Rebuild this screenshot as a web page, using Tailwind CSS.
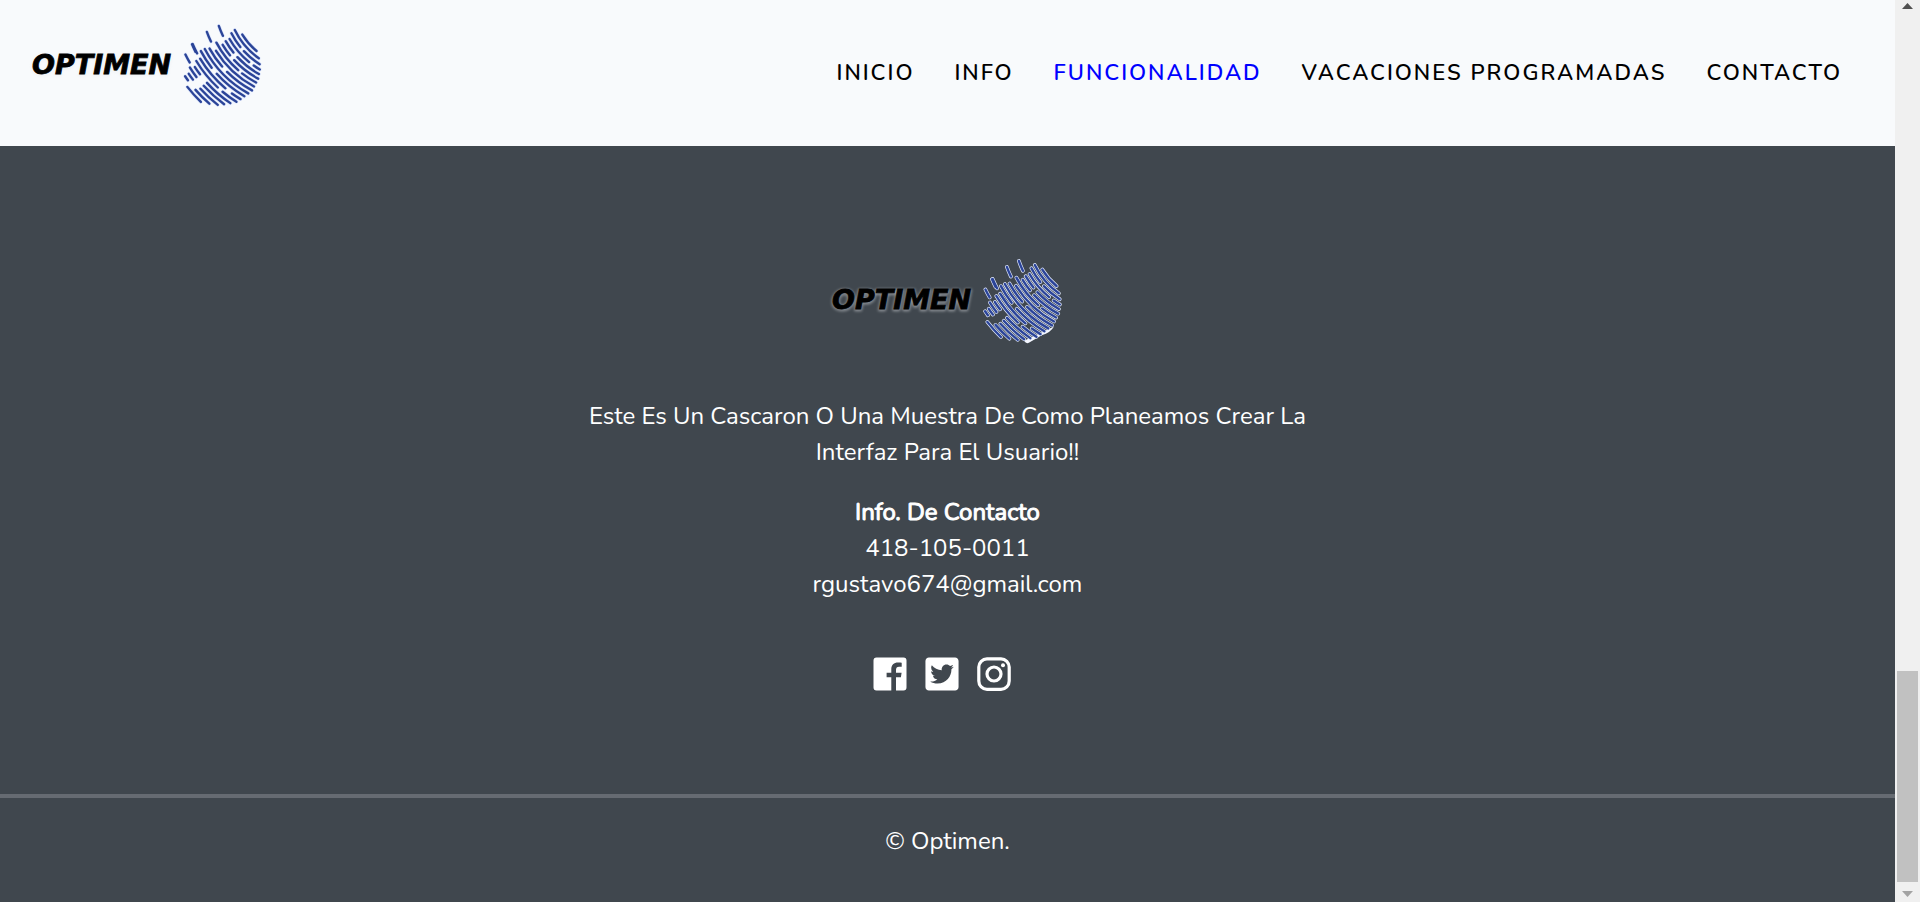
<!DOCTYPE html>
<html lang="es">
<head>
<meta charset="utf-8">
<meta name="viewport" content="width=device-width, initial-scale=1">
<title>Optimen</title>
<script src="https://cdn.jsdelivr.net/npm/@tailwindcss/browser@4"></script>
</head>
<body class="flex h-screen overflow-hidden bg-[#40474e] font-['Nunito','Lato',sans-serif]">
<!-- Shared logo artwork -->
<svg class="hidden" aria-hidden="true">
  <defs>
    <filter id="soft" x="-10%" y="-10%" width="120%" height="120%"><feGaussianBlur stdDeviation="1.5"/></filter>
    <g id="rings" fill="none" stroke-linecap="round">
      <circle pathLength="360" cx="389" cy="-53" r="204" stroke-dasharray="0 130 18 360"/>
      <circle pathLength="360" cx="389" cy="-53" r="217" stroke-dasharray="0 125 29 360"/>
      <circle pathLength="360" cx="389" cy="-53" r="230" stroke-dasharray="0 122 15 4 12 360"/>
      <circle pathLength="360" cx="389" cy="-53" r="243" stroke-dasharray="0 120 5 4 21 360"/>
      <circle pathLength="360" cx="389" cy="-53" r="256" stroke-dasharray="0 119 18 4 9 4 7 360"/>
      <circle pathLength="360" cx="389" cy="-53" r="269" stroke-dasharray="0 118 19 4 8 360"/>
      <circle pathLength="360" cx="389" cy="-53" r="282" stroke-dasharray="0 118 10 3 21 360"/>
      <circle pathLength="360" cx="389" cy="-53" r="295" stroke-dasharray="0 118 30 6 6 360"/>
      <circle pathLength="360" cx="389" cy="-53" r="308" stroke-dasharray="0 118 17 4 12 360"/>
      <circle pathLength="360" cx="389" cy="-53" r="321" stroke-dasharray="0 119 33 360"/>
      <circle pathLength="360" cx="389" cy="-53" r="334" stroke-dasharray="0 120 18 4 10 360"/>
      <circle pathLength="360" cx="389" cy="-53" r="347" stroke-dasharray="0 121 5 4 19 3 5 360"/>
      <circle pathLength="360" cx="389" cy="-53" r="360" stroke-dasharray="0 122 8 3 16 360"/>
      <circle pathLength="360" cx="389" cy="-53" r="373" stroke-dasharray="0 124 14 5 4 360"/>
      <circle pathLength="360" cx="389" cy="-53" r="379" stroke-dasharray="0 150 4 360"/>
      <circle pathLength="360" cx="389" cy="-53" r="386" stroke-dasharray="0 126 12 5 5 360"/>
      <circle pathLength="360" cx="389" cy="-53" r="399" stroke-dasharray="0 128 10 5 3 360"/>
      <circle pathLength="360" cx="389" cy="-53" r="412" stroke-dasharray="0 131 8 5 2 360"/>
      <circle pathLength="360" cx="389" cy="-53" r="425" stroke-dasharray="0 134 8 360"/>
      <circle pathLength="360" cx="389" cy="-53" r="349" stroke-dasharray="0 153 4 360"/>
    </g>
    <symbol id="logo" viewBox="0 0 255 100">
      <g font-family="DejaVu Sans, sans-serif" font-size="27" font-weight="700" font-style="italic">
        <text x="12" y="60" fill="none" stroke="#e8eaee" stroke-width="2" opacity=".6" filter="url(#soft)" aria-hidden="true">OPTIMEN</text>
        <text x="12" y="59" fill="#000" stroke="#000" stroke-width=".8">OPTIMEN</text>
      </g>
      <g transform="translate(149 1) scale(.34)">
        <path d="M250 222Q240 240 214 248L176 270Q168 274 162 264Z" fill="#f4f7ff" filter="url(#soft)"/>
        <use href="#rings" stroke="#dfe7fb" stroke-width="11" filter="url(#soft)"/>
        <use href="#rings" stroke="#2b4498" stroke-width="7"/>
      </g>
    </symbol>
  </defs>
</svg>

<div class="flex min-w-0 flex-1 flex-col">
  <header class="flex items-start justify-between bg-[#f8fafc] py-[15px] pl-5 pr-[53px]">
    <a href="#inicio" aria-label="Optimen"><svg class="h-[100px] w-[255px]"><use href="#logo"/></svg></a>
    <nav class="flex h-[116px] items-center gap-10 text-[22px] font-semibold tracking-[2px] text-black">
      <a href="#inicio">INICIO</a>
      <a href="#info">INFO</a>
      <a href="#funcionalidad" class="text-[#0000ff]">FUNCIONALIDAD</a>
      <a href="#vacaciones">VACACIONES PROGRAMADAS</a>
      <a href="#contacto">CONTACTO</a>
    </nav>
  </header>

  <footer class="flex flex-1 flex-col items-center pt-[104px] text-center text-2xl/9 text-white">
    <svg class="h-[100px] w-[255px]" role="img" aria-label="Optimen"><use href="#logo"/></svg>
    <p class="mt-12 max-w-[740px]">Este Es Un Cascaron O Una Muestra De Como Planeamos Crear La Interfaz Para El Usuario!!</p>
    <p class="mt-6"><strong class="font-normal [-webkit-text-stroke:1px_#fff]">Info. De Contacto</strong><br>418-105-0011<br>rgustavo674@gmail.com</p>
    <div class="mt-[55px] mr-3 flex gap-[18px]">
      <a href="#facebook" aria-label="Facebook"><svg class="size-[34px]" viewBox="0 0 34 34" fill="#fff"><path d="M3.500 .5h27a3 3 0 0 1 3 3v27a3 3 0 0 1-3 3h-7.500V20.300h4.900l.7-4.600h-5.600v-2.700c0-2.100.9-3.300 3.100-3.300h2.600V5.700c-.9-.2-2.300-.3-3.500-.3-4.500 0-6.900 2.700-6.900 6.800v3.500h-4.700v4.600h4.700v13.200h-14.800a3 3 0 0 1-3-3v-27a3 3 0 0 1 3-3z"/></svg></a>
      <a href="#twitter" aria-label="Twitter"><svg class="size-[34px]" viewBox="-6 26 460 460" fill="#fff"><path d="M400 32H48C21.500 32 0 53.500 0 80v352c0 26.500 21.500 48 48 48h352c26.500 0 48-21.500 48-48V80c0-26.500-21.500-48-48-48zm-48.900 158.800c.2 2.800.2 5.700.2 8.500 0 86.700-66 186.600-186.600 186.600-37.200 0-71.700-10.800-100.700-29.400 5.300.6 10.400.8 15.800.8 30.700 0 58.900-10.400 81.400-28-28.800-.6-53-19.500-61.300-45.500 10.100 1.500 19.200 1.500 29.600-1.200-30-6.100-52.500-32.500-52.500-64.400v-.8c8.700 4.900 18.900 7.900 29.600 8.300a65.447 65.447 0 0 1-29.200-54.600c0-12.200 3.200-23.400 8.900-33.100 32.300 39.800 80.800 65.800 135.200 68.600-9.300-44.500 24-80.600 64-80.600 18.900 0 35.900 7.900 47.900 20.700 14.800-2.800 29-8.300 41.600-15.800-4.900 15.200-15.200 28-28.800 36.100 13.200-1.400 26-5.100 37.800-10.200-8.900 13.100-20.100 24.700-32.900 34z"/></svg></a>
      <a href="#instagram" aria-label="Instagram"><svg class="size-[34px]" viewBox="0 0 34 34" fill="none" stroke="#fff" stroke-width="3.200"><rect x="1.800" y="1.900" width="30.400" height="30.400" rx="8.200"/><circle cx="17" cy="17" r="7"/><circle cx="26" cy="8.200" r="2" fill="#fff" stroke="none"/></svg></a>
    </div>
    <hr class="mt-[103px] w-full border-t-4 border-[#666b72]">
    <p class="mt-[25px]">© Optimen.</p>
  </footer>
</div>

<!-- Page scrollbar -->
<div class="flex w-[25px] shrink-0 flex-col items-center bg-[#f0f0f0]" aria-hidden="true">
  <svg class="mt-[3px] h-[6px] w-[11px]" viewBox="0 0 11 6" fill="#505050"><path d="M0 6L5.500 0L11 6z"/></svg>
  <div class="mt-auto h-[211px] w-[21px] bg-[#c1c1c1]"></div>
  <svg class="mt-[9px] mb-[5px] h-[6px] w-[11px]" viewBox="0 0 11 6" fill="#a3a3a3"><path d="M0 0h11L5.500 6z"/></svg>
</div>
</body>
</html>
